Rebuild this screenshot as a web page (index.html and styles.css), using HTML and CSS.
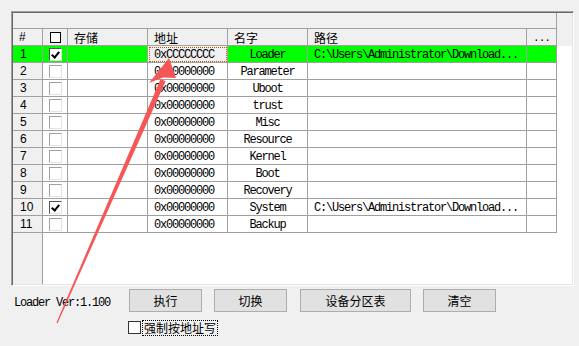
FILE: index.html
```html
<!DOCTYPE html>
<html lang="zh-CN">
<head>
    <meta charset="UTF-8">
    <title>Loader</title>
    <link rel="stylesheet" href="styles.css">
</head>
<body>
    <div class="frame">
        <div class="table">
            <div class="topbar"></div>
            <div class="grid">
                <div class="hd idx">#</div>
                <div class="hd chk"><span class="hbox"></span></div>
                <div class="hd">存储</div>
                <div class="hd">地址</div>
                <div class="hd">名字</div>
                <div class="hd">路径</div>
                <div class="hd dots">...</div>

                <div class="c idx sel">1</div>
                <div class="c chk sel"><span class="box on"></span></div>
                <div class="c sel"></div>
                <div class="c mono addr focus">0xCCCCCCCC</div>
                <div class="c mono name sel">Loader</div>
                <div class="c mono path sel">C:\Users\Administrator\Download...</div>
                <div class="c sel"></div>

                <div class="c idx">2</div>
                <div class="c chk"><span class="box"></span></div>
                <div class="c"></div>
                <div class="c mono addr">0x00000000</div>
                <div class="c mono name">Parameter</div>
                <div class="c mono path"></div>
                <div class="c"></div>

                <div class="c idx">3</div>
                <div class="c chk"><span class="box"></span></div>
                <div class="c"></div>
                <div class="c mono addr">0x00000000</div>
                <div class="c mono name">Uboot</div>
                <div class="c mono path"></div>
                <div class="c"></div>

                <div class="c idx">4</div>
                <div class="c chk"><span class="box"></span></div>
                <div class="c"></div>
                <div class="c mono addr">0x00000000</div>
                <div class="c mono name">trust</div>
                <div class="c mono path"></div>
                <div class="c"></div>

                <div class="c idx">5</div>
                <div class="c chk"><span class="box"></span></div>
                <div class="c"></div>
                <div class="c mono addr">0x00000000</div>
                <div class="c mono name">Misc</div>
                <div class="c mono path"></div>
                <div class="c"></div>

                <div class="c idx">6</div>
                <div class="c chk"><span class="box"></span></div>
                <div class="c"></div>
                <div class="c mono addr">0x00000000</div>
                <div class="c mono name">Resource</div>
                <div class="c mono path"></div>
                <div class="c"></div>

                <div class="c idx">7</div>
                <div class="c chk"><span class="box"></span></div>
                <div class="c"></div>
                <div class="c mono addr">0x00000000</div>
                <div class="c mono name">Kernel</div>
                <div class="c mono path"></div>
                <div class="c"></div>

                <div class="c idx">8</div>
                <div class="c chk"><span class="box"></span></div>
                <div class="c"></div>
                <div class="c mono addr">0x00000000</div>
                <div class="c mono name">Boot</div>
                <div class="c mono path"></div>
                <div class="c"></div>

                <div class="c idx">9</div>
                <div class="c chk"><span class="box"></span></div>
                <div class="c"></div>
                <div class="c mono addr">0x00000000</div>
                <div class="c mono name">Recovery</div>
                <div class="c mono path"></div>
                <div class="c"></div>

                <div class="c idx">10</div>
                <div class="c chk"><span class="box on"></span></div>
                <div class="c"></div>
                <div class="c mono addr">0x00000000</div>
                <div class="c mono name">System</div>
                <div class="c mono path">C:\Users\Administrator\Download...</div>
                <div class="c"></div>

                <div class="c idx">11</div>
                <div class="c chk"><span class="box"></span></div>
                <div class="c"></div>
                <div class="c mono addr">0x00000000</div>
                <div class="c mono name">Backup</div>
                <div class="c mono path"></div>
                <div class="c"></div>
            </div>
            <div class="rest">
                <div class="rest-idx"></div>
            </div>
        </div>
        <div class="side">
            <div class="side-top"></div>
        </div>
    </div>

    <div class="footer">
        <div class="ver mono">Loader Ver:1.100</div>
        <button class="btn">执行</button>
        <button class="btn">切换</button>
        <button class="btn wide">设备分区表</button>
        <button class="btn">清空</button>
    </div>
    <div class="force">
        <span class="fbox"></span>
        <span class="flabel">强制按地址写</span>
    </div>

    <svg class="arrow" width="579" height="346" viewBox="0 0 579 346">
        <polygon points="160.6,79 165.6,81.2 57.6,323.3 56.4,322.7" fill="#f75656"/>
        <polygon points="169,58 149,83 163,77.5 176,78" fill="#f75656"/>
    </svg>
</body>
</html>
```

FILE: styles.css
```css
body {
    margin: 0;
    width: 579px;
    height: 346px;
    overflow: hidden;
    background-color: #f0f0f0;
    font-family: "Noto Sans CJK SC", "Liberation Sans", sans-serif;
    font-size: 12px;
    color: #000;
    position: relative;
}
.frame {
    margin: 11px 0 0 11px;
    width: 563px;
    height: 275px;
    box-sizing: border-box;
    display: flex;
    border: 1px solid;
    border-color: #a0a0a0 #ffffff #ffffff #a0a0a0;
    box-shadow: inset 1px 1px 0 #696969, inset -1px -1px 0 #e3e3e3;
    padding: 1px;
    background-color: #fff;
}
.table {
    width: 544px;
    display: flex;
    flex-direction: column;
}
.topbar {
    height: 16px;
    box-sizing: border-box;
    background-color: #f0f0f0;
    border-bottom: 1px solid #a0a0a0;
    border-right: 1px solid #a0a0a0;
}
.grid {
    display: grid;
    grid-template-columns: 30px 25px 80px 80px 80px 219px 30px;
    grid-auto-rows: 17px;
}
.grid > div {
    box-sizing: border-box;
    border-right: 1px solid #a0a0a0;
    border-bottom: 1px solid #a0a0a0;
    line-height: 17px;
    white-space: nowrap;
    overflow: hidden;
}
.hd {
    background-color: #f0f0f0;
    padding-left: 6px;
}
.hd.idx {
    font-family: "Liberation Sans", sans-serif;
    padding-left: 6px;
}
.hd.dots {
    text-align: center;
    padding: 0;
    font-family: "Liberation Mono", monospace;
    font-size: 11px;
    letter-spacing: -1px;
    line-height: 19px;
}
.hd.chk {
    padding: 0 0 0 7px;
    display: flex;
    align-items: center;
}
.hbox {
    width: 9px;
    height: 9px;
    border: 1px solid #000;
    background: #fff;
}
.c.idx {
    background-color: #f0f0f0;
    font-family: "Liberation Sans", sans-serif;
    padding-left: 7px;
}
.c.chk {
    display: flex;
    align-items: center;
    padding-left: 6px;
}
.box {
    width: 13px;
    height: 13px;
    box-sizing: border-box;
    border: 1px solid;
    border-color: #a0a0a0 #e3e3e3 #e3e3e3 #a0a0a0;
    background-color: #fff;
    position: relative;
}
.box.on {
    border-color: #555 #e3e3e3 #e3e3e3 #555;
}
.box.on::after {
    content: "";
    position: absolute;
    left: 3px;
    top: 1px;
    width: 3px;
    height: 6px;
    border: solid #000;
    border-width: 0 2px 2px 0;
    transform: rotate(40deg);
}
.sel {
    background-color: #00ff00;
}
.c.idx.sel {
    background-color: #00ff00;
}
.mono {
    font-family: "Liberation Mono", monospace;
    font-size: 12px;
    letter-spacing: -1.2px;
}
.grid > .mono {
    line-height: 18px;
}
.addr {
    padding-left: 6px;
}
.name {
    text-align: center;
}
.path {
    padding-left: 6px;
}
.focus {
    background-color: #f0f0f0;
    outline: 1px dotted #b35c00;
    outline-offset: -2px;
}
.rest {
    flex: 1;
    display: flex;
}
.rest-idx {
    width: 30px;
    box-sizing: border-box;
    background-color: #f0f0f0;
    border-right: 1px solid #a0a0a0;
}
.side {
    flex: 1;
}
.side-top {
    height: 33px;
    background-color: #f0f0f0;
}
.footer {
    display: flex;
    align-items: center;
    margin-top: 3px;
    padding-left: 14px;
    height: 23px;
}
.ver {
    width: 115px;
    padding-top: 4px;
}
.btn {
    width: 73px;
    height: 23px;
    margin: 0 12px 0 0;
    padding: 0;
    border: 1px solid #adadad;
    background-color: #e1e1e1;
    font-family: "Noto Sans CJK SC", sans-serif;
    font-size: 12px;
    color: #000;
}
.btn.wide {
    width: 111px;
    margin-left: 1px;
}
.force {
    display: flex;
    align-items: center;
    margin: 8px 0 0 128px;
    height: 15px;
}
.fbox {
    width: 13px;
    height: 13px;
    box-sizing: border-box;
    border: 1px solid #333;
    background-color: #fff;
    margin-right: 2px;
}
.flabel {
    outline: 1px dotted #000;
    line-height: 14px;
    padding: 0 1px;
}
.arrow {
    position: absolute;
    left: 0;
    top: 0;
    pointer-events: none;
}
```
